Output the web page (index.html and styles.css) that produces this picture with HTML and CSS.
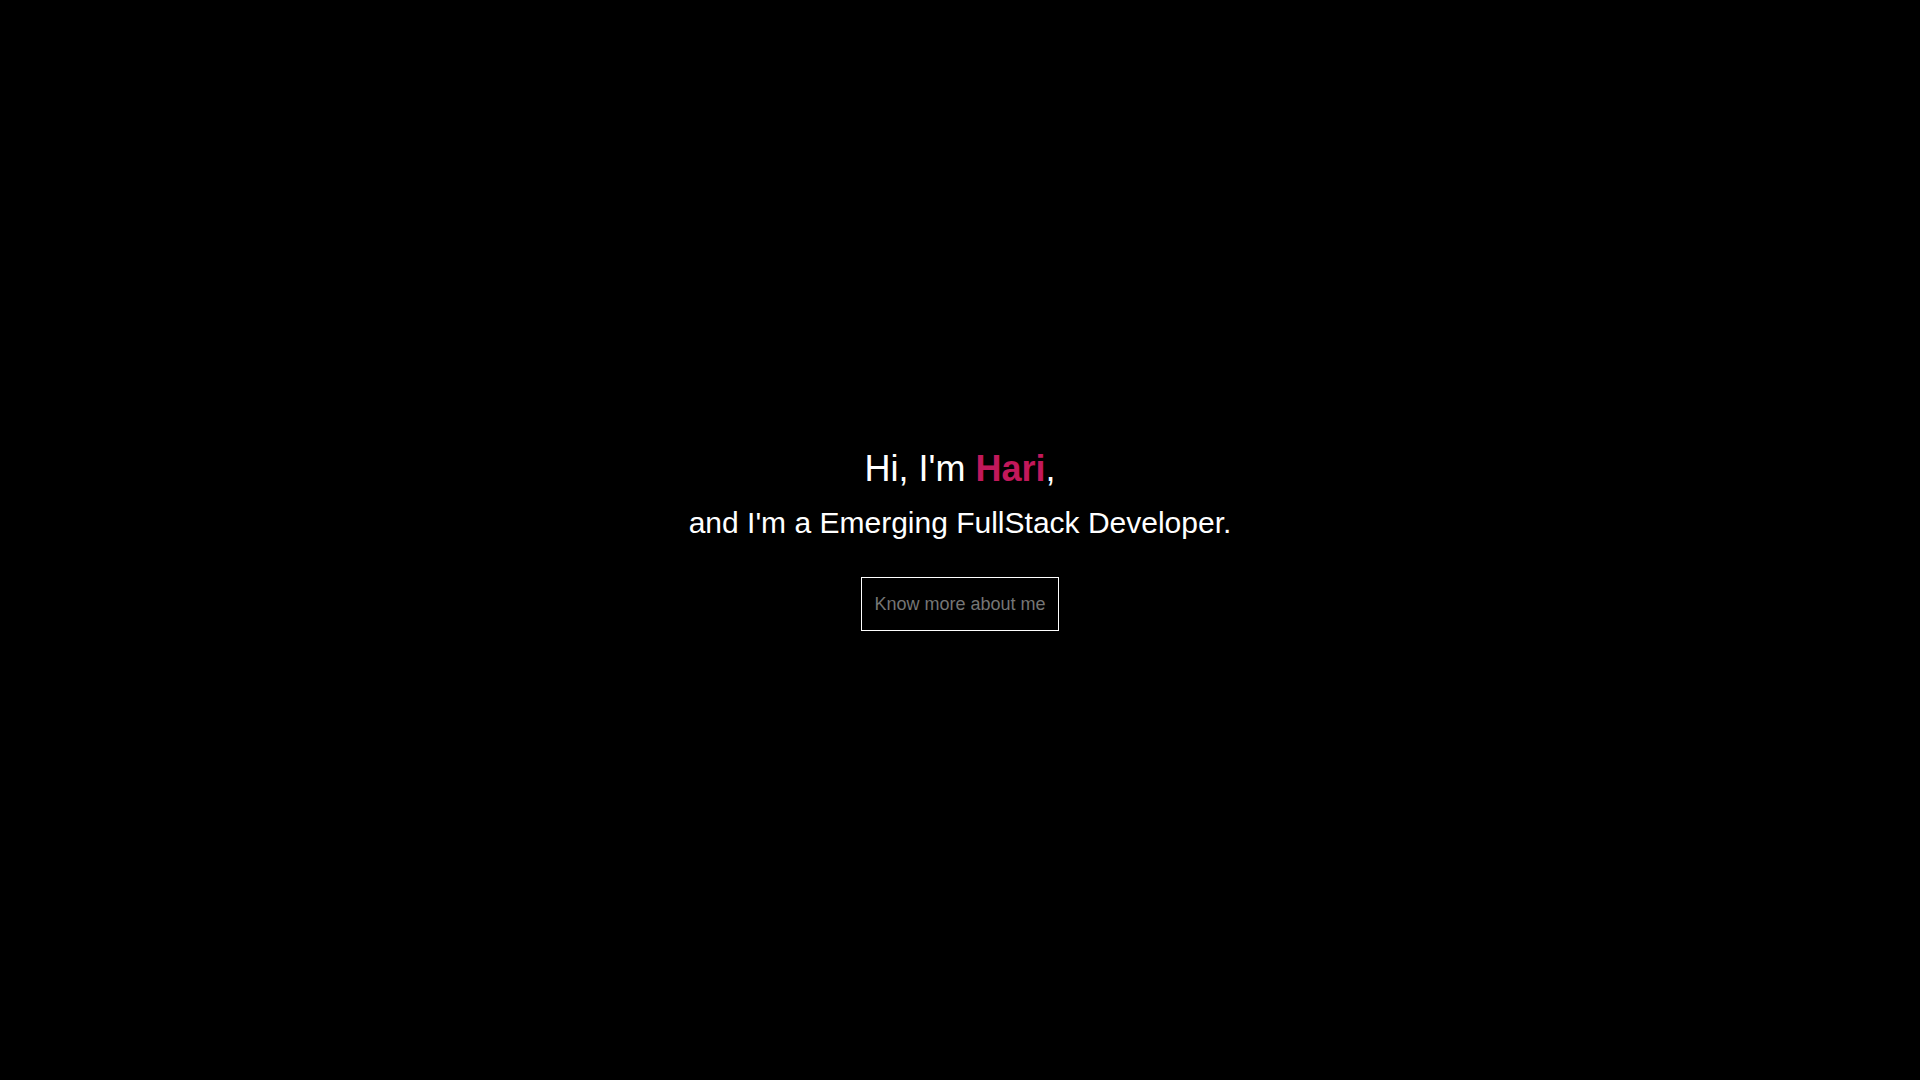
FILE: index.html
```html
<!DOCTYPE html>
<html lang="en">
<head>
  <meta charset="utf-8">
  <meta name="viewport" content="width=device-width, initial-scale=1">
  <title>Hari</title>
  <link rel="stylesheet" href="styles.css">
</head>
<body>
  <main class="hero">
    <h1 class="greeting">Hi, I'm <strong class="name">Hari</strong>,</h1>
    <p class="role">and I'm a Emerging FullStack Developer.</p>
    <button class="more" type="button">Know more about me</button>
  </main>
</body>
</html>
```
FILE: styles.css
```css
body {
  margin: 0;
  background: #000;
  color: #fff;
  font-family: "Liberation Sans", Arial, sans-serif;
}

.hero {
  display: flex;
  flex-direction: column;
  align-items: center;
  justify-content: center;
  min-height: 100vh;
  text-align: center;
}

.greeting {
  margin: 0 0 16px;
  font-size: 36px;
  font-weight: 400;
  line-height: 40px;
}

.name {
  font-weight: 700;
  color: #c2185b;
}

.role {
  margin: 0 0 36px;
  font-size: 30px;
  line-height: 36px;
}

.more {
  padding: 12px;
  border: 1px solid #fff;
  border-radius: 0;
  background: transparent;
  color: #757575;
  font-family: inherit;
  font-size: 18px;
  line-height: 28px;
  cursor: pointer;
}
```
